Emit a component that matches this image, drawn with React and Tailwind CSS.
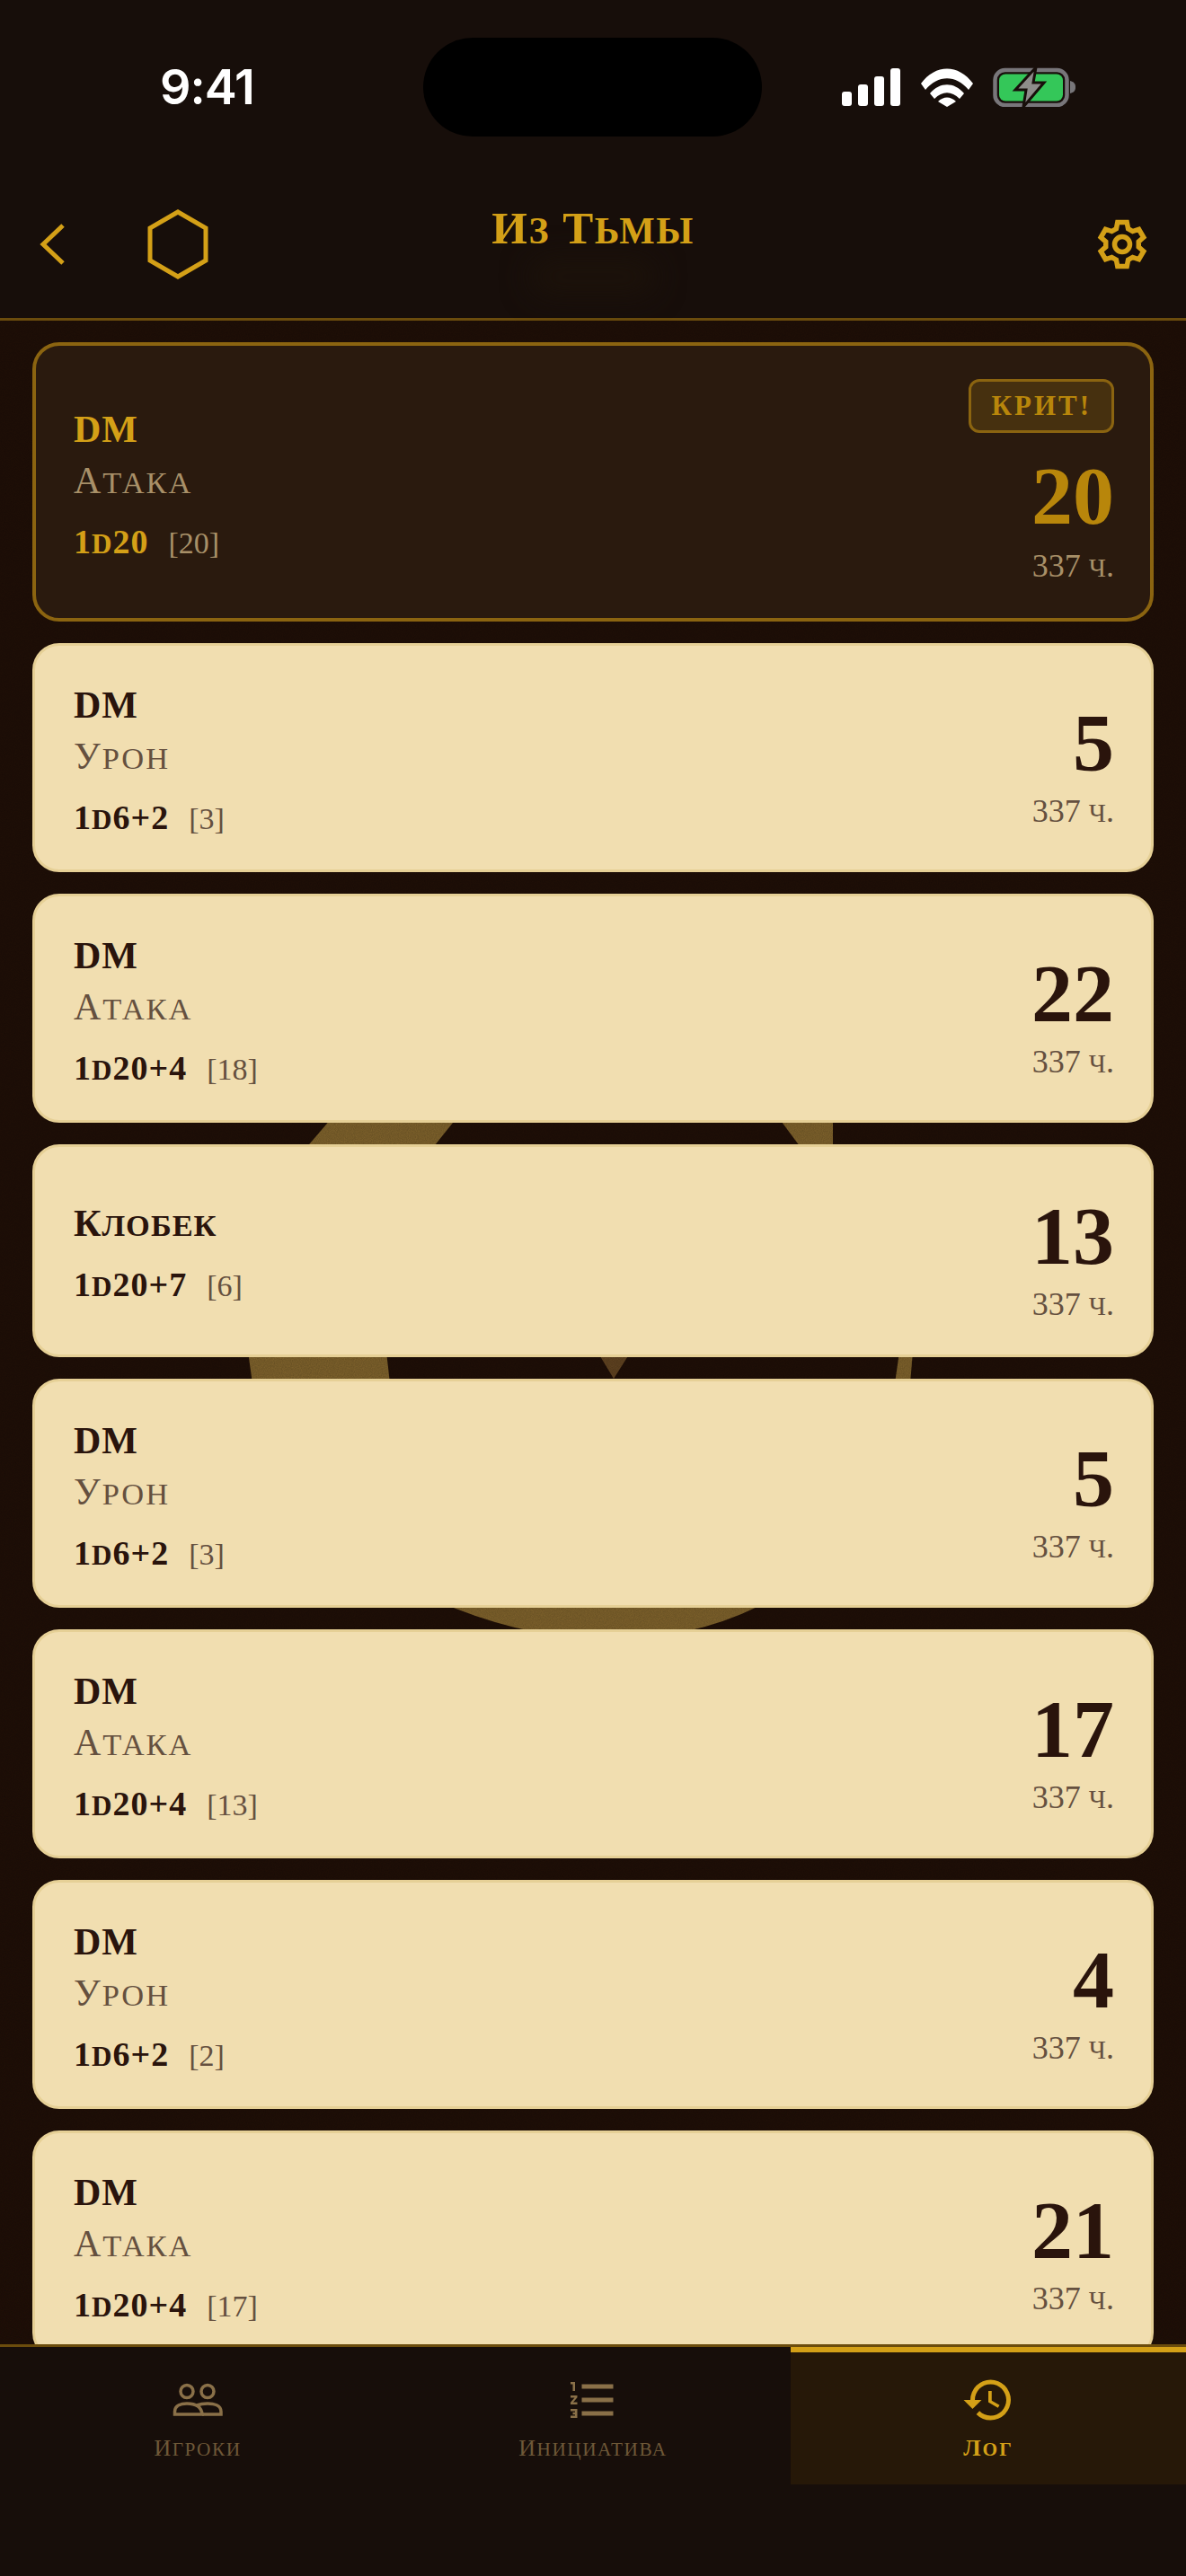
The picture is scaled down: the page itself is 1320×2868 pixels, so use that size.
import { MdFormatListNumbered, MdHistory } from "react-icons/md";

const SERIF = "[font-family:'Liberation_Serif',serif]";

const ENTRIES = [
  { name: "DM", action: "Урон", dice: "1d6+2", roll: "[3]", total: 5 },
  { name: "DM", action: "Атака", dice: "1d20+4", roll: "[18]", total: 22 },
  { name: "Клобек", dice: "1d20+7", roll: "[6]", total: 13 },
  { name: "DM", action: "Урон", dice: "1d6+2", roll: "[3]", total: 5 },
  { name: "DM", action: "Атака", dice: "1d20+4", roll: "[13]", total: 17 },
  { name: "DM", action: "Урон", dice: "1d6+2", roll: "[2]", total: 4 },
  { name: "DM", action: "Атака", dice: "1d20+4", roll: "[17]", total: 21 },
];

const gearPoints = Array.from({ length: 6 }, (_, k) =>
  [
    [18.5, -21],
    [25, -12],
    [25, 12],
    [18.5, 21],
  ].map(([r, d]) => {
    const a = ((k * 60 + d - 90) * Math.PI) / 180;
    return `${(r * Math.cos(a)).toFixed(2)},${(r * Math.sin(a)).toFixed(2)}`;
  }).join(" ")
).join(" ");

// small caps: lowercase runs render as slightly smaller capitals
function Sc({ children }) {
  return String(children)
    .split(/([a-zа-яё]+)/)
    .map((part, i) =>
      /^[a-zа-яё]+$/.test(part) ? (
        <span key={i} className="text-[0.82em] uppercase">
          {part}
        </span>
      ) : (
        part
      )
    );
}

function StatusBar() {
  return (
    <div className="flex h-[110px] items-center">
      <div className="flex w-[471px] pl-[178px] font-['Inter',sans-serif] text-[54px] font-semibold leading-none tracking-[-1px] text-white">
        9:41
      </div>
      <div className="h-[110px] w-[377px] rounded-full bg-black" />
      <div className="ml-[89px] flex items-center">
        <svg width="66" height="42" viewBox="0 0 66 42" fill="#fff">
          <rect x="0" y="26" width="11" height="16" rx="3" />
          <rect x="18" y="18" width="11" height="24" rx="3" />
          <rect x="36" y="9" width="11" height="33" rx="3" />
          <rect x="54" y="0" width="11" height="42" rx="3" />
        </svg>
        <svg className="ml-[22px]" width="58" height="43" viewBox="0 0 58 43" fill="#fff">
          <path d="M0 17 C16 -5 42 -5 58 17 L53 24 C39 7 19 7 5 24 Z" />
          <path d="M10 28 C21 15 37 15 48 28 L43 34 C34 25 24 25 15 34 Z" />
          <path d="M19 37 C25 31 33 31 39 37 L29 43 Z" />
        </svg>
        <svg className="ml-[22px]" width="94" height="44" viewBox="0 0 94 44">
          <rect x="2.5" y="3" width="80" height="39" rx="11" fill="none" stroke="#78767a" strokeWidth="4.5" />
          <rect x="7" y="7.5" width="71" height="30" rx="7" fill="#34c759" />
          <path d="M86 15 C90 16 92 18 92 22 C92 26 90 28 86 29 Z" fill="#78767a" />
          <path
            d="M48 0 L25 25 H37 L34 44 L57 17 H45 Z"
            fill="#8e8c8a"
            stroke="#170e0a"
            strokeWidth="3"
            strokeLinejoin="miter"
          />
        </svg>
      </div>
    </div>
  );
}

function Header() {
  return (
    <header className="relative h-[357px] shrink-0 border-b-[3px] border-[#6b4c0d] bg-[#170e0a] pt-[42px]">
      <StatusBar />
      <div className="absolute left-[590px] top-[288px] h-[40px] w-[140px] rounded-full bg-[#1c120a] blur-lg" />
      <div className="relative mt-[81px] flex items-start justify-between pl-[42px] pr-[41px]">
        <div className="flex items-center">
          <svg width="32" height="48" viewBox="0 0 32 48" fill="none" stroke="#d4a017" strokeWidth="5">
            <path d="M28 3 L6 24 L28 45" />
          </svg>
          <svg className="ml-[90px]" width="68" height="78" viewBox="0 0 68 78" fill="none" stroke="#d4a017" strokeWidth="5">
            <path d="M34 3 L65 21 V57 L34 75 L3 57 V21 Z" />
          </svg>
        </div>
        <h1 className={`absolute left-0 right-0 top-[-7px] text-center text-[51px] font-bold leading-[56px] tracking-[1.5px] text-[#d4a017] ${SERIF}`}>
          <Sc>Из Тьмы</Sc>
        </h1>
        <svg className="mt-[9px]" width="60" height="60" viewBox="-30 -30 60 60" fill="none" stroke="#d4a017" strokeWidth="5.5">
          <polygon points={gearPoints} />
          <circle r="8.5" />
        </svg>
      </div>
    </header>
  );
}

function Crest() {
  return (
    <svg className="absolute left-0 top-0" width="1320" height="2253" viewBox="0 357 1320 2253">
      <g fill="#7c602b">
        <path d="M369 1245 H508 L480 1280 H339 Z" />
        <path d="M867 1245 H927 V1280 H893 Z" />
        <path d="M276 1505 H430 L434 1540 H281 Z" />
        <path d="M1001 1505 H1016 L1013 1540 H996 Z" />
        <path d="M500 1788 Q590 1825 680 1825 Q770 1825 845 1788 Z" />
      </g>
      <path d="M665 1505 H702 L683 1535 Z" fill="#5f4220" />
    </svg>
  );
}

// fine grain that sits over the dark backdrop
function Grain() {
  return (
    <svg className="absolute left-0 top-0 opacity-15" width="1320" height="2253">
      <filter id="grain">
        <feTurbulence type="fractalNoise" baseFrequency="0.9" numOctaves="2" />
        <feColorMatrix values="0 0 0 0 0  0 0 0 0 0  0 0 0 0 0  0 0 0 1.6 -0.3" />
      </filter>
      <rect width="1320" height="2253" filter="url(#grain)" />
    </svg>
  );
}

function CritCard() {
  return (
    <div className="relative flex h-[311px] shrink-0 items-center justify-between rounded-[30px] border-[4px] border-[#8b6410] bg-[#2a1a0e] pl-[42px] pr-[40px]">
      <div className="pt-[10px]">
        <div className="text-[42px] font-bold leading-[50px] tracking-[1px] text-[#d4a017]">DM</div>
        <div className="mt-[7px] text-[42px] leading-[50px] tracking-[2px] text-[#a89068]">
          <Sc>Атака</Sc>
        </div>
        <div className="mt-[16px] flex items-baseline text-[38px] leading-[50px]">
          <span className="font-bold tracking-[1px] text-[#d4a017]">
            <Sc>1d20</Sc>
          </span>
          <span className="ml-[22px] text-[34px] text-[#a89068]">[20]</span>
        </div>
      </div>
      <div className="flex flex-col items-end">
        <div className="rounded-[12px] border-[3px] border-[#8b6410] bg-[#46300f] px-[22px] text-[31px] font-bold uppercase leading-[54px] tracking-[3px] text-[#b8860b]">
          Крит!
        </div>
        <div className="mt-[28px] text-[92px] font-bold leading-[84px] text-[#b8860b]">20</div>
        <div className="mt-[16px] text-[36px] leading-[40px] text-[#a89068]">
          337 <Sc>ч.</Sc>
        </div>
      </div>
    </div>
  );
}

function LogCard({ name, action, dice, roll, total }) {
  return (
    <div
      className={
        action
          ? "flex h-[255px] shrink-0 items-center justify-between rounded-[30px] border-[3px] border-[#e6d096] bg-[#f1deb0] pl-[43px] pr-[41px] text-[#2a140c]"
          : "flex h-[237px] shrink-0 items-center justify-between rounded-[30px] border-[3px] border-[#e6d096] bg-[#f1deb0] pl-[43px] pr-[41px] text-[#2a140c]"
      }
    >
      <div className="pt-[10px]">
        <div className="text-[42px] font-bold leading-[50px] tracking-[1px]">
          <Sc>{name}</Sc>
        </div>
        {action && (
          <div className="mt-[7px] text-[42px] leading-[50px] tracking-[2px] text-[#65503f]">
            <Sc>{action}</Sc>
          </div>
        )}
        <div className="mt-[16px] flex items-baseline text-[38px] leading-[50px]">
          <span className="font-bold tracking-[1px]">
            <Sc>{dice}</Sc>
          </span>
          <span className="ml-[22px] text-[34px] text-[#65503f]">{roll}</span>
        </div>
      </div>
      <div className="flex flex-col items-end pt-[22px]">
        <div className="text-[92px] font-bold leading-[84px]">{total}</div>
        <div className="mt-[14px] text-[36px] leading-[40px] text-[#65503f]">
          337 <Sc>ч.</Sc>
        </div>
      </div>
    </div>
  );
}

function PlayersIcon() {
  return (
    <svg width="60" height="60" viewBox="0 0 60 60" fill="none" stroke="#8a7048" strokeWidth="3.5">
      <circle cx="18" cy="20.5" r="7" />
      <circle cx="41" cy="20.5" r="7" />
      <path d="M4.5 46 V43 C4.5 36 12 34 18 34 C26 34 34 36 35 46 Z" />
      <path d="M29 36 C33 34.5 37 34 41 34 C48 34 56 36 56 43 V46 H35" />
    </svg>
  );
}

function Tab({ icon, label, active }) {
  return (
    <div
      className={
        active
          ? "flex h-[153px] w-[440px] flex-col items-center border-t-[6px] border-[#d4a017] bg-[#261808] pt-[23px]"
          : "flex h-[153px] w-[440px] flex-col items-center pt-[29px]"
      }
    >
      {icon}
      <div
        className={
          active
            ? "mt-[8px] text-[26px] font-bold leading-[32px] tracking-[2px] text-[#d4a017]"
            : "mt-[8px] text-[26px] leading-[32px] tracking-[1.5px] text-[#6e5838]"
        }
      >
        <Sc>{label}</Sc>
      </div>
    </div>
  );
}

export default function App() {
  return (
    <div className={`flex h-[2868px] w-[1320px] flex-col overflow-hidden bg-[#170e0a] ${SERIF}`}>
      <Header />
      <main className="relative flex min-h-0 flex-1 flex-col gap-[24px] overflow-hidden bg-[#1f0f07] px-[36px] pt-[24px]">
        <Crest />
        <Grain />
        <CritCard />
        {ENTRIES.map((entry, i) => (
          <div key={i} className="relative">
            <LogCard {...entry} />
          </div>
        ))}
      </main>
      <footer className="h-[258px] shrink-0 border-t-[3px] border-[#6b4c0d] bg-[#170e0a]">
        <div className="flex">
          <Tab icon={<PlayersIcon />} label="Игроки" />
          <Tab icon={<MdFormatListNumbered size={60} color="#8a7048" />} label="Инициатива" />
          <Tab icon={<MdHistory size={60} color="#d4a017" />} label="Лог" active />
        </div>
      </footer>
    </div>
  );
}
